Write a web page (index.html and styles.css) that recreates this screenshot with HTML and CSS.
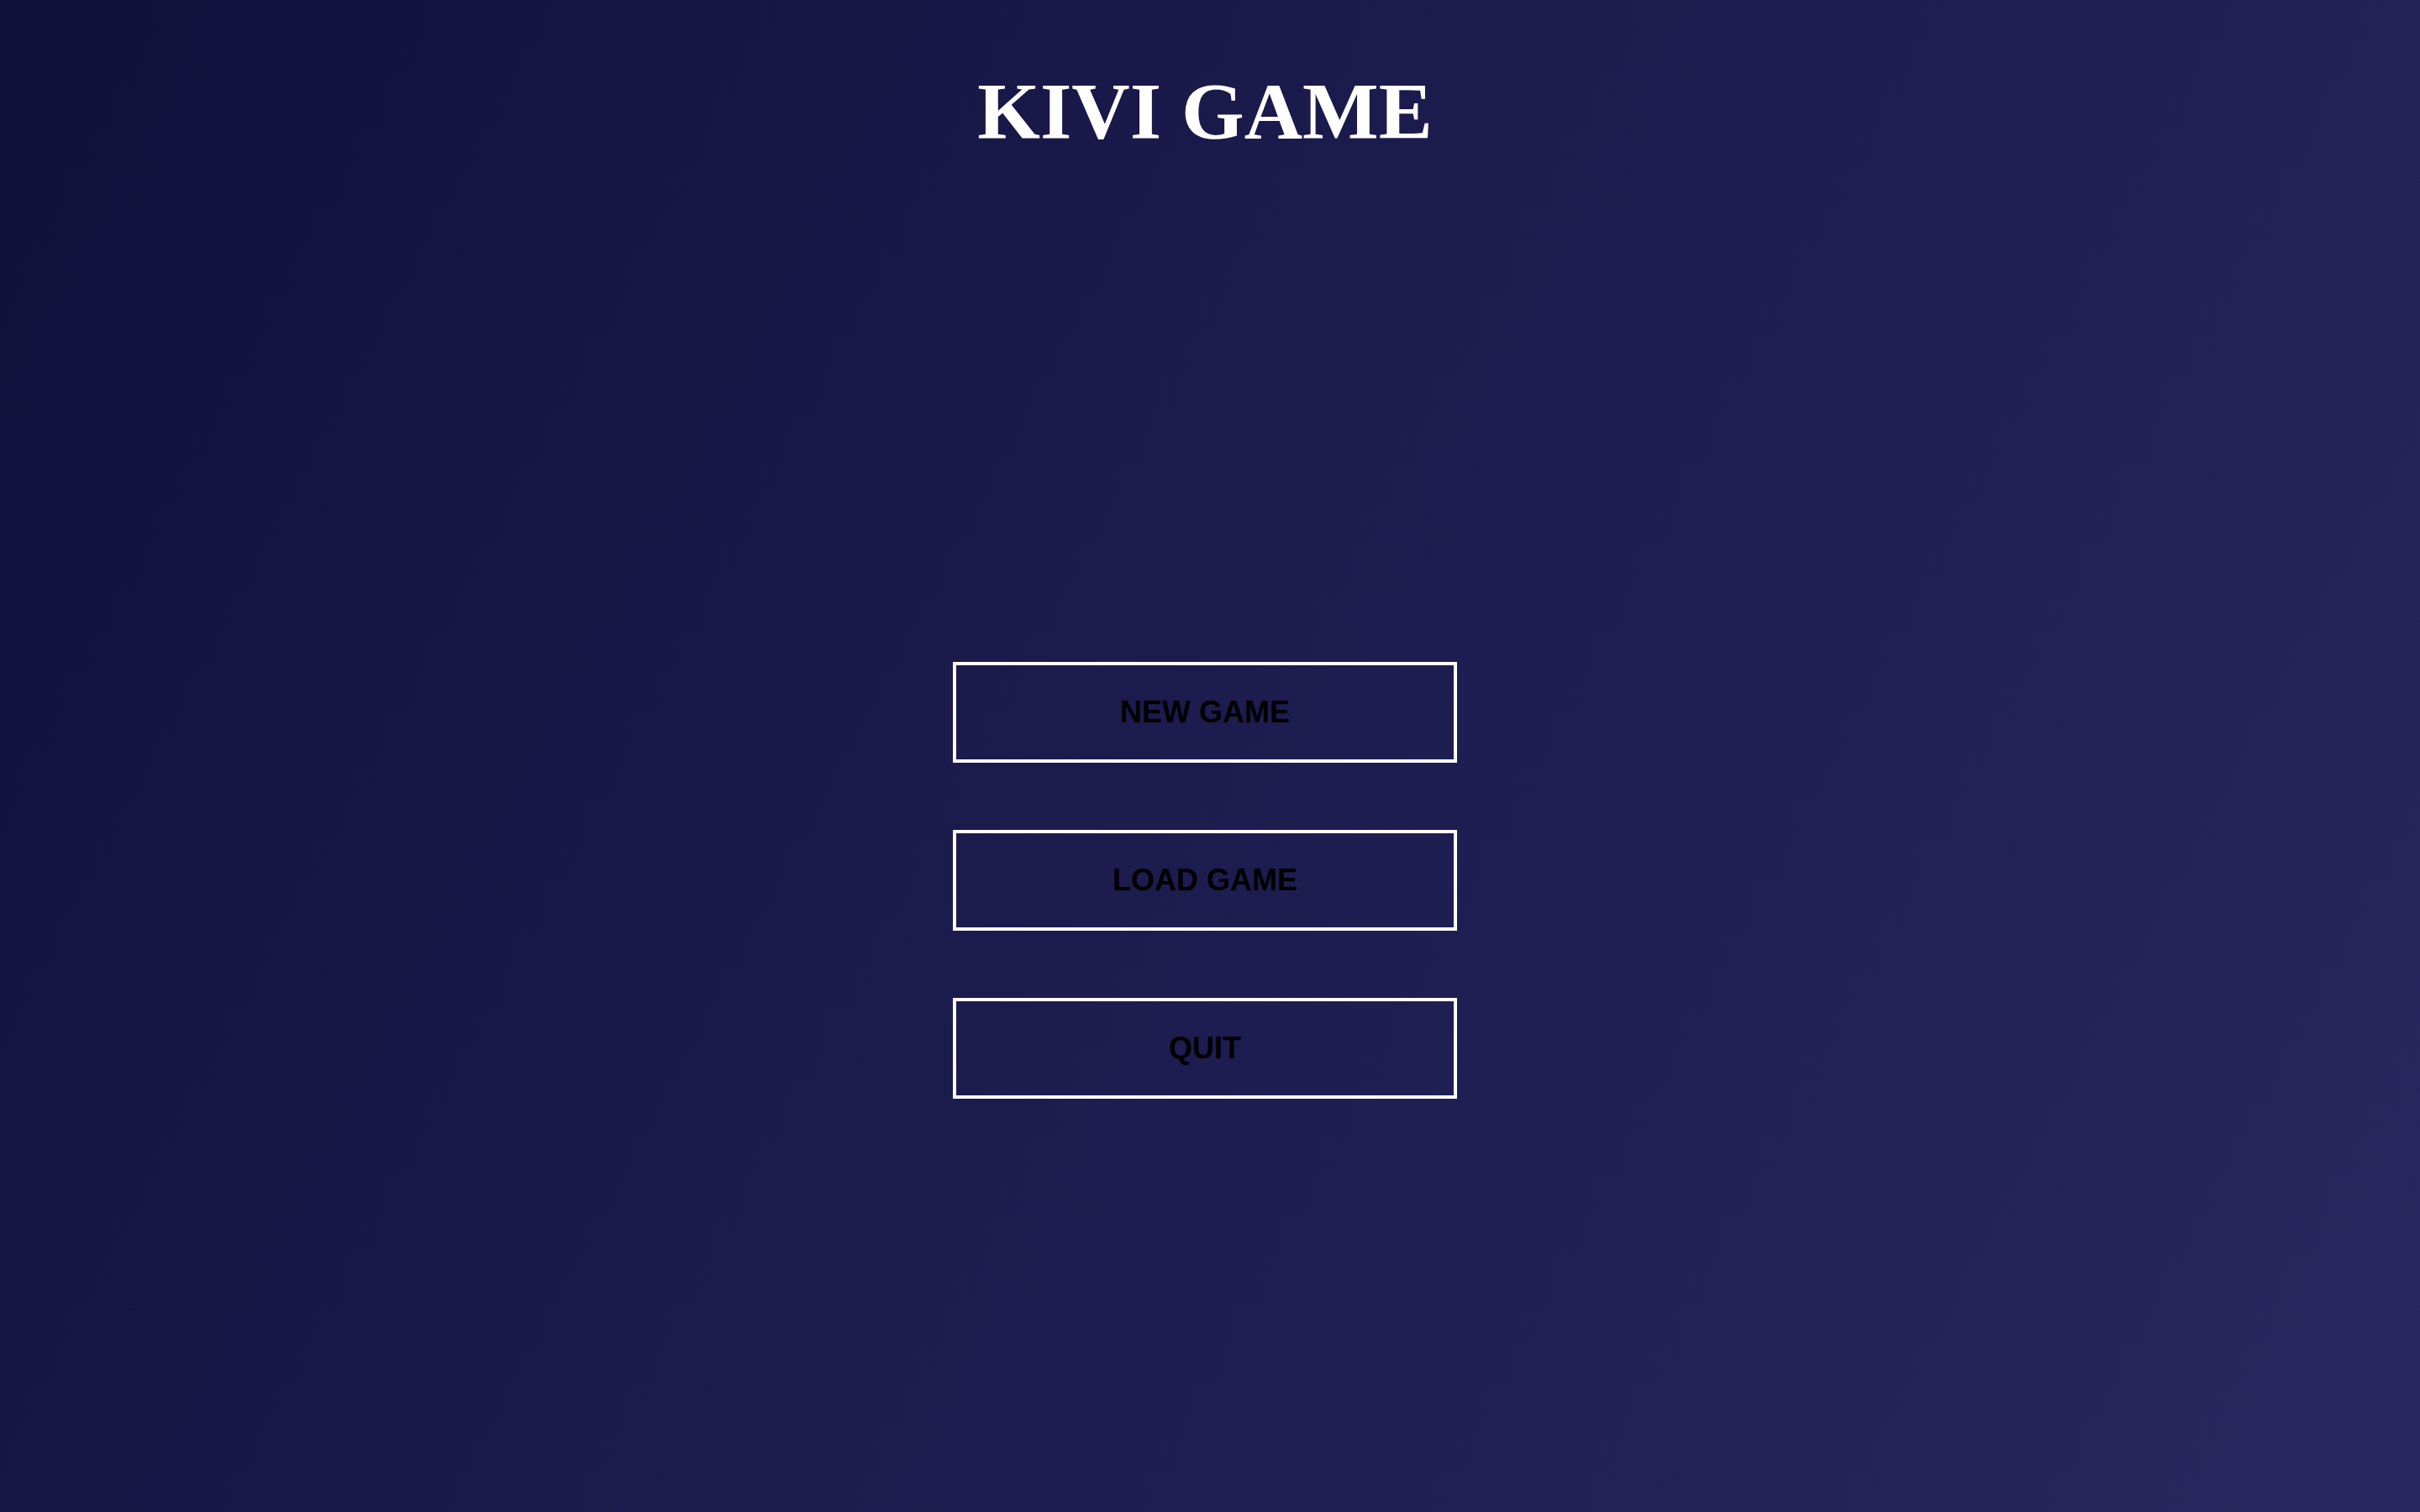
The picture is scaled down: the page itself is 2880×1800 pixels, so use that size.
FILE: index.html
```html
<!DOCTYPE html>
<html lang="en">
<head>
<meta charset="utf-8">
<title>Kivi Game</title>
<link rel="stylesheet" href="styles.css">
</head>
<body>
<div class="screen">
  <h1 class="title">KIVI GAME</h1>
  <nav class="menu">
    <button class="menu-btn">NEW GAME</button>
    <button class="menu-btn">LOAD GAME</button>
    <button class="menu-btn">QUIT</button>
  </nav>
</div>
</body>
</html>
```
FILE: styles.css
```css
html, body {
  margin: 0;
  padding: 0;
  height: 100%;
}
body {
  background: linear-gradient(118deg, #10103a 0%, #1d1c4f 50%, #28275f 100%);
  font-family: "Liberation Sans", Arial, sans-serif;
}
.screen {
  min-height: 100%;
  display: flex;
  flex-direction: column;
  align-items: center;
  padding-top: 85px;
  padding-right: 12px;
  box-sizing: border-box;
}
.title {
  margin: 0;
  font-family: "Liberation Serif", "Times New Roman", serif;
  font-weight: bold;
  font-size: 96px;
  line-height: 1;
  color: #fff;
  text-align: center;
}
.menu {
  margin-top: 607px;
  display: flex;
  flex-direction: column;
  gap: 80px;
}
.menu-btn {
  width: 600px;
  height: 120px;
  box-sizing: border-box;
  border: 4px solid #fff;
  background: transparent;
  color: #000;
  font-family: "Liberation Sans", Arial, sans-serif;
  font-weight: bold;
  font-size: 36px;
  padding: 0;
  cursor: pointer;
}
```
